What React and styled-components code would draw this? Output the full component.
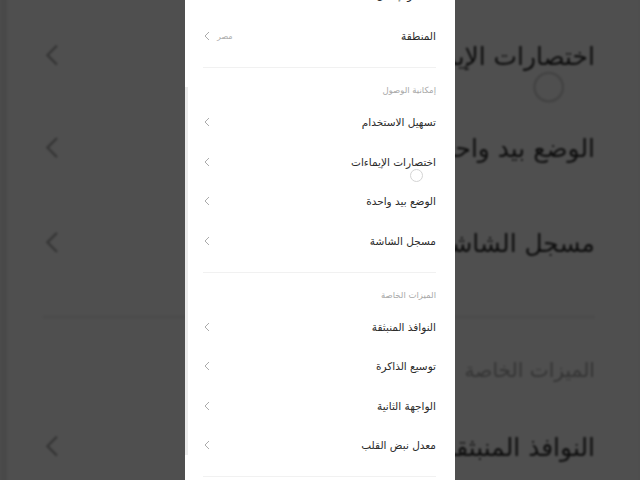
import React from 'react'
import styled, { createGlobalStyle, css } from 'styled-components'

const GlobalStyle = createGlobalStyle`
  html, body { margin: 0; padding: 0; background: #4f4f4f; }
  body { font-family: "DejaVu Sans", "Noto Sans", sans-serif; }
`

const Stage = styled.div`
  width: 640px;
  height: 480px;
  overflow: hidden;
  display: grid;
  place-items: center;
  background: #4f4f4f;
`

// same screen drawn twice: once blown up and dimmed behind, once sharp on top
const Layer = styled.div`
  grid-area: 1 / 1;
  ${p => p.$backdrop && css`
    transform: scale(2.37);
    filter: brightness(0.31) blur(0.5px);
  `}
`

const Screen = styled.div`
  position: relative;
  width: 270px;
  height: 480px;
  overflow: hidden;
  direction: rtl;
  background:
    linear-gradient(#ececec, #ececec) 0 87px / 3px 368px no-repeat,
    #fff;
`

const List = styled.div`
  margin-top: -26.25px;
`

const Group = styled.section`
  margin: 0 19px 0 18px;
  padding-bottom: 11.5px;
  border-bottom: 1px solid #f1f1f1;
`

const SectionTitle = styled.h3`
  margin: 0;
  padding: 16px 0 6px;
  font-size: 8.5px;
  line-height: 12px;
  font-weight: normal;
  color: #a8a8a8;
`

const Row = styled.div`
  height: ${p => p.$h || 39.5}px;
  display: flex;
  align-items: center;
  gap: 7px;
`

const Label = styled.span`
  flex: 1;
  font-size: 10.5px;
  color: #2b2b2b;
  white-space: nowrap;
`

const Value = styled.span`
  font-size: 8px;
  color: #ababab;
`

const Arrow = styled.svg`
  width: 6px;
  height: 10px;
  margin-left: 1px;
  flex: none;
`

const Touch = styled.div`
  position: absolute;
  left: 225px;
  top: 169px;
  width: 11px;
  height: 11px;
  border: 1px solid #d4d4d4;
  border-radius: 50%;
`

const Chevron = () => (
  <Arrow viewBox="0 0 6 10">
    <path d="M5 1 L1 5 L5 9" fill="none" stroke="#ababab" strokeWidth="1" />
  </Arrow>
)

const groups = [
  {
    rows: [
      { label: 'اللغة والإدخال', h: 42.5 },
      { label: 'المنطقة', value: 'مصر' },
    ],
  },
  {
    title: 'إمكانية الوصول',
    rows: [
      { label: 'تسهيل الاستخدام' },
      { label: 'اختصارات الإيماءات' },
      { label: 'الوضع بيد واحدة' },
      { label: 'مسجل الشاشة' },
    ],
  },
  {
    title: 'الميزات الخاصة',
    rows: [
      { label: 'النوافذ المنبثقة' },
      { label: 'توسيع الذاكرة' },
      { label: 'الواجهة الثانية' },
      { label: 'معدل نبض القلب' },
    ],
  },
]

function SettingsScreen() {
  return (
    <Screen>
      <List>
        {groups.map((g, i) => (
          <Group key={i}>
            {g.title && <SectionTitle>{g.title}</SectionTitle>}
            {g.rows.map(r => (
              <Row key={r.label} $h={r.h}>
                <Label>{r.label}</Label>
                {r.value && <Value>{r.value}</Value>}
                <Chevron />
              </Row>
            ))}
          </Group>
        ))}
      </List>
      <Touch />
    </Screen>
  )
}

export default function App() {
  return (
    <>
      <GlobalStyle />
      <Stage>
        <Layer $backdrop aria-hidden="true">
          <SettingsScreen />
        </Layer>
        <Layer>
          <SettingsScreen />
        </Layer>
      </Stage>
    </>
  )
}
